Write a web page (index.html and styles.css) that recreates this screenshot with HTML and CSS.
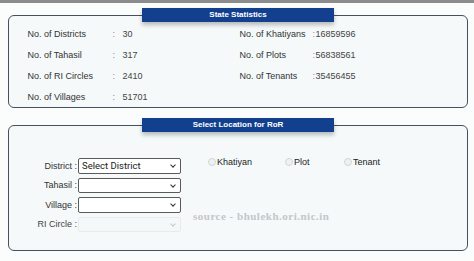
FILE: index.html
```html
<!DOCTYPE html>
<html lang="en">
<head>
    <meta charset="UTF-8">
    <title>Bhulekh - RoR</title>
    <link rel="stylesheet" href="styles.css">
</head>
<body>
    <div class="topbar"></div>

    <div class="panel">
        <div class="panel-title">State Statistics</div>
        <div class="stats">
            <span class="lbl">No. of Districts</span><span class="colon">:</span><span class="val">30</span>
            <span class="lbl">No. of Khatiyans</span><span class="colon">:</span><span class="val">16859596</span>

            <span class="lbl">No. of Tahasil</span><span class="colon">:</span><span class="val">317</span>
            <span class="lbl">No. of Plots</span><span class="colon">:</span><span class="val">56838561</span>

            <span class="lbl">No. of RI Circles</span><span class="colon">:</span><span class="val">2410</span>
            <span class="lbl">No. of Tenants</span><span class="colon">:</span><span class="val">35456455</span>

            <span class="lbl">No. of Villages</span><span class="colon">:</span><span class="val">51701</span>
        </div>
    </div>

    <div class="panel panel-form">
        <div class="panel-title">Select Location for RoR</div>
        <div class="form">
            <div class="fields">
                <div class="field">
                    <label>District :</label>
                    <span class="select-wrap"><select><option>Select District</option></select></span>
                </div>
                <div class="field">
                    <label>Tahasil :</label>
                    <span class="select-wrap"><select><option></option></select></span>
                </div>
                <div class="field">
                    <label>Village :</label>
                    <span class="select-wrap"><select><option></option></select></span>
                </div>
                <div class="field disabled">
                    <label>RI Circle :</label>
                    <span class="select-wrap"><select disabled><option></option></select></span>
                </div>
            </div>
            <div class="radios">
                <label class="radio khatiyan"><span class="dot"></span>Khatiyan</label>
                <label class="radio plot"><span class="dot"></span>Plot</label>
                <label class="radio tenant"><span class="dot"></span>Tenant</label>
            </div>
        </div>
        <div class="watermark">source - bhulekh.ori.nic.in</div>
    </div>
</body>
</html>
```

FILE: styles.css
```css
body {
    margin: 0;
    background: #fbfdfd;
    font-family: 'Liberation Sans', Arial, sans-serif;
    font-size: 9px;
    color: #333;
}
.topbar {
    height: 3px;
    background: #8c8c8c;
}
.panel {
    position: relative;
    margin: 12px 6px 0 8px;
    border: 1.5px solid #46505e;
    border-radius: 6px;
    background: #f5f9fa;
}
.panel-title {
    width: 192px;
    height: 14px;
    margin: -8px auto 0;
    background: #123f8e;
    color: #fff;
    font-weight: bold;
    font-size: 8px;
    line-height: 14px;
    text-align: center;
    box-shadow: 0 3px 4px rgba(0,0,0,0.25);
}
.stats {
    display: grid;
    grid-template-columns: 85px 10px 117px 73px 3px auto;
    grid-auto-rows: 21px;
    align-items: center;
    padding: 1px 0 0 18.5px;
}
.colon {
    color: #888;
}
.val {
    color: #444;
}
.panel-form {
    margin-top: 17px;
}
.form {
    display: flex;
    padding: 26px 0 18px 0;
}
.fields {
    display: flex;
    flex-direction: column;
    gap: 4px;
}
.field {
    display: flex;
    align-items: center;
}
.field label {
    width: 68px;
    text-align: right;
    padding-right: 1px;
}
.select-wrap {
    position: relative;
    display: block;
}
.select-wrap::after {
    content: '';
    position: absolute;
    right: 6px;
    top: 5px;
    width: 3px;
    height: 3px;
    border-right: 1.2px solid #333;
    border-bottom: 1.2px solid #333;
    transform: rotate(45deg);
    pointer-events: none;
}
.field select {
    display: block;
    width: 103px;
    height: 15.5px;
    margin: 0;
    padding: 0 3px;
    border: 1px solid #5a5a5a;
    border-radius: 2px;
    background: #fff;
    appearance: none;
    font-family: 'Roboto', sans-serif;
    font-size: 9.5px;
    color: #222;
}
.field.disabled label {
    color: #444;
}
.field.disabled select {
    border-color: #e3e6e8;
    background: #f6f8f8;
}
.field.disabled .select-wrap::after {
    border-color: #c4c8ca;
}
.radios {
    display: flex;
    align-items: center;
    height: 10px;
    margin-top: -1px;
    padding-left: 27px;
}
.radio {
    display: flex;
    align-items: center;
    color: #222;
}
.dot {
    width: 6px;
    height: 6px;
    border: 1px solid #d2d6d8;
    border-radius: 50%;
    background: #eef1f2;
    margin-right: 1px;
}
.khatiyan {
    width: 77px;
}
.plot {
    width: 59px;
}
.watermark {
    position: absolute;
    left: 184px;
    top: 84px;
    font-family: 'Liberation Serif', serif;
    font-weight: bold;
    font-size: 11px;
    letter-spacing: 0.5px;
    color: #c3c7c9;
}
```
